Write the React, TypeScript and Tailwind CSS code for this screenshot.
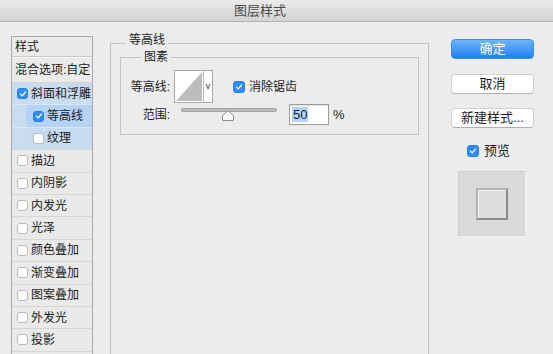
import React from 'react';

const Check: React.FC<{ checked?: boolean; size?: string }> = ({ checked = false, size = 'w-[11px] h-[11px]' }) => (
    <span
        className={`${size} shrink-0 rounded-[3px] flex items-center justify-center ${
            checked ? 'bg-[#2f8cf3] border border-[#2a7fe0]' : 'bg-white border border-[#b9b9b9]'
        }`}
    >
        {checked && (
            <svg viewBox="0 0 10 10" className="w-[8px] h-[8px]">
                <path d="M1.8 5.2 L4 7.4 L8.3 2.4" fill="none" stroke="#fff" strokeWidth="1.6" strokeLinecap="round" strokeLinejoin="round" />
            </svg>
        )}
    </span>
);

const effects = ['描边', '内阴影', '内发光', '光泽', '颜色叠加', '渐变叠加', '图案叠加', '外发光', '投影'];

const StyleList: React.FC = () => (
    <div className="ml-[11px] mt-[14px] w-[82px] h-[340px] shrink-0 border border-[#a9a9a9] bg-[#eaeaea] text-[12px] text-[#1c1c1c]">
        <div className="h-[20px] flex items-center pl-[3px] border-b border-[#c9c9c9] shadow-[0_1px_0_#f7f7f7]">样式</div>
        <div className="h-[26px] flex items-center pl-[3px] border-b border-[#d4d4d4]">混合选项:自定</div>
        <div className="h-[22.4px] flex items-center pl-[5px] gap-[3px] bg-[#cadcf0] border-b border-[#dde7f3]">
            <Check checked />
            <span>斜面和浮雕</span>
        </div>
        <div className="h-[22.4px] flex bg-[#cadcf0] border-b border-[#dde7f3]">
            <div className="ml-[14px] flex-1 flex items-center pl-[7px] gap-[3px] bg-[#b5d3f6]">
                <Check checked />
                <span>等高线</span>
            </div>
        </div>
        <div className="h-[22.4px] flex bg-[#cadcf0] border-b border-[#d6d6d6]">
            <div className="ml-[14px] flex-1 flex items-center pl-[7px] gap-[3px] bg-[#c7dbf0]">
                <Check />
                <span>纹理</span>
            </div>
        </div>
        {effects.map((name) => (
            <div key={name} className="h-[22.4px] flex items-center pl-[5px] gap-[3px] border-b border-[#d6d6d6]">
                <Check />
                <span>{name}</span>
            </div>
        ))}
    </div>
);

const ContourSwatch: React.FC = () => (
    <div className="ml-[4px] w-[39px] h-[33px] flex border border-[#a7a7a7] bg-white">
        <div className="w-[29px] h-full border-r border-[#b9b9b9] p-[1px]">
            <svg viewBox="0 0 28 31" preserveAspectRatio="none" className="w-full h-full">
                <polygon points="0,31 28,0 28,31" fill="#bdbdbd" />
            </svg>
        </div>
        <div className="flex-1 flex items-center justify-center text-[9px] text-[#333] leading-none">v</div>
    </div>
);

const RangeSlider: React.FC<{ value: number }> = ({ value }) => (
    <div className="ml-[11px] w-[96px] h-[17px] relative">
        <div className="mt-[2px] h-[4px] rounded-full bg-[#bdbdbd] border border-[#a3a3a3]" />
        <svg viewBox="0 0 12 11" className="absolute w-[12px] h-[11px] top-[4px]" style={{ left: `calc(${value}% - 6px)` }}>
            <path d="M0.5 10.5 V5.5 L6 0.8 L11.5 5.5 V10.5 Z" fill="#fafafa" stroke="#8e8e8e" strokeWidth="1" />
        </svg>
    </div>
);

const Btn: React.FC<{ label: string; primary?: boolean }> = ({ label, primary }) => (
    <div
        className={`w-[83px] h-[20px] rounded-[4px] flex items-center justify-center text-[13px] ${
            primary
                ? 'bg-gradient-to-b from-[#6cb4fb] to-[#1a7ff6] text-white border border-[#3a8ef2]'
                : 'bg-white text-[#1c1c1c] border border-[#d0d0d0] border-b-[#afafaf]'
        }`}
    >
        {label}
    </div>
);

export default function App() {
    return (
        <div
            className="w-[553px] h-[354px] overflow-hidden bg-[#ececec] flex flex-col"
            style={{ fontFamily: '"Liberation Sans", "Noto Sans CJK SC", sans-serif' }}
        >
            <div className="h-[22px] shrink-0 flex items-center justify-center pr-[33px] bg-gradient-to-b from-[#ebebeb] to-[#d3d3d3] border-b border-[#b3b3b3] text-[13px] text-[#4a4a4a]">
                图层样式
            </div>

            <div className="flex flex-1 items-start">
                <StyleList />

                <fieldset className="ml-[17px] mt-[11px] w-[319px] h-[340px] shrink-0 border border-[#c2c2c2] text-[12px] text-[#1c1c1c]">
                    <legend className="ml-[15px] px-[3px] leading-[14px] pb-[6px]">等高线</legend>
                    <fieldset className="ml-[9px] -mt-[3px] w-[299px] border border-[#c2c2c2] pb-[9px]">
                        <legend className="ml-[20px] px-[3px] leading-[14px]">图素</legend>
                        <div className="mt-[6px] h-[33px] flex items-center">
                            <span className="w-[49px] text-right">等高线:</span>
                            <ContourSwatch />
                            <span className="ml-[20px]">
                                <Check checked size="w-[12px] h-[12px]" />
                            </span>
                            <span className="ml-[4px]">消除锯齿</span>
                        </div>
                        <div className="mt-[1px] h-[21px] flex items-center">
                            <span className="w-[49px] text-right">范围:</span>
                            <RangeSlider value={49} />
                            <div className="ml-[12px] w-[40px] h-[21px] bg-white border border-[#9c9c9c] shadow-[inset_0_1px_1px_rgba(0,0,0,0.12)] flex items-center pl-[2px] text-[13px]">
                                <span className="bg-[#b3d5fb] leading-[15px] px-[1px]">50</span>
                            </div>
                            <span className="ml-[4px] text-[13px]">%</span>
                        </div>
                    </fieldset>
                </fieldset>

                <div className="ml-[22px] mt-[17px] w-[83px] flex flex-col">
                    <Btn label="确定" primary />
                    <div className="mt-[15px]">
                        <Btn label="取消" />
                    </div>
                    <div className="mt-[14px]">
                        <Btn label="新建样式..." />
                    </div>
                    <div className="mt-[13px] pl-[16px] flex items-center gap-[5px] text-[13px] text-[#1c1c1c]">
                        <Check checked size="w-[12px] h-[12px]" />
                        <span>预览</span>
                    </div>
                    <div className="mt-[10px] ml-[7px] w-[68px] h-[66px] bg-[#d9d9d9] border border-[#cdcdcd] border-b-[#f2f2f2] border-r-[#ededed] flex items-center justify-center">
                        <div className="w-[32px] h-[32px] bg-[#dcdcdc] border-2 border-t-[#b4b4b4] border-l-[#b4b4b4] border-r-[#8a8a8a] border-b-[#8a8a8a] shadow-[inset_1px_1px_0_#f4f4f4]" />
                    </div>
                </div>
            </div>
        </div>
    );
}
